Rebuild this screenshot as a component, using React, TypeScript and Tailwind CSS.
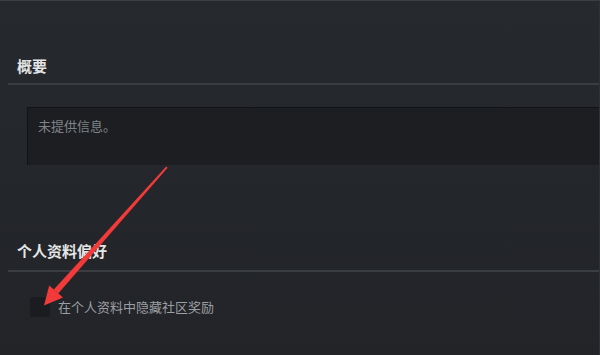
import React from "react";

const cjk = { fontFamily: '"Noto Sans CJK SC", "Noto Sans", sans-serif' };

function SectionTitle({ children }: { children: React.ReactNode }) {
  return (
    <div className="pl-[9px] h-[20px] leading-[20px] text-[15px] font-bold text-[#e4e5e6]">
      {children}
    </div>
  );
}

function Divider({ className = "" }: { className?: string }) {
  return <div className={`h-[2px] bg-[#3a3d42] ${className}`} />;
}

function Arrow() {
  // tapering shaft + head, tip on the checkbox
  return (
    <svg
      className="absolute left-0 top-0 pointer-events-none"
      width="600"
      height="355"
      viewBox="0 0 600 355"
    >
      <polygon points="167.6,166.8 166.2,165.4 53.8,288.6 58.2,292.6" fill="#f23a3a" />
      <polygon points="44,304.5 49.2,284.4 63,296.6" fill="#f23a3a" />
    </svg>
  );
}

export default function App() {
  return (
    <div
      className="relative w-[600px] h-[355px] overflow-hidden bg-gradient-to-b from-[#26292e] to-[#222428] border-t border-[#3b3e43] border-r border-r-[#2e3136]"
      style={cjk}
    >
      <div className="pl-[8px]">
        <div className="pt-[55px]">
          <SectionTitle>概要</SectionTitle>
          <Divider className="mt-[7px]" />
        </div>

        <div className="ml-[19px] mt-[22px] h-[58px] bg-[#1c1e21] border-t border-l border-[#111315] pl-[10px] pt-[9px] text-[13px] leading-[18px] text-[#7f8388]">
          未提供信息。
        </div>

        <div className="mt-[76px]">
          <SectionTitle>个人资料偏好</SectionTitle>
          <Divider className="mt-[9px]" />
        </div>

        <div className="mt-[25px] ml-[22px] flex items-center gap-[8px]">
          <div className="w-[20px] h-[20px] bg-[#1a1c1f] rounded-[2px]" />
          <span className="text-[13px] leading-[18px] text-[#9b9ea2]">在个人资料中隐藏社区奖励</span>
        </div>
      </div>
      <Arrow />
    </div>
  );
}
